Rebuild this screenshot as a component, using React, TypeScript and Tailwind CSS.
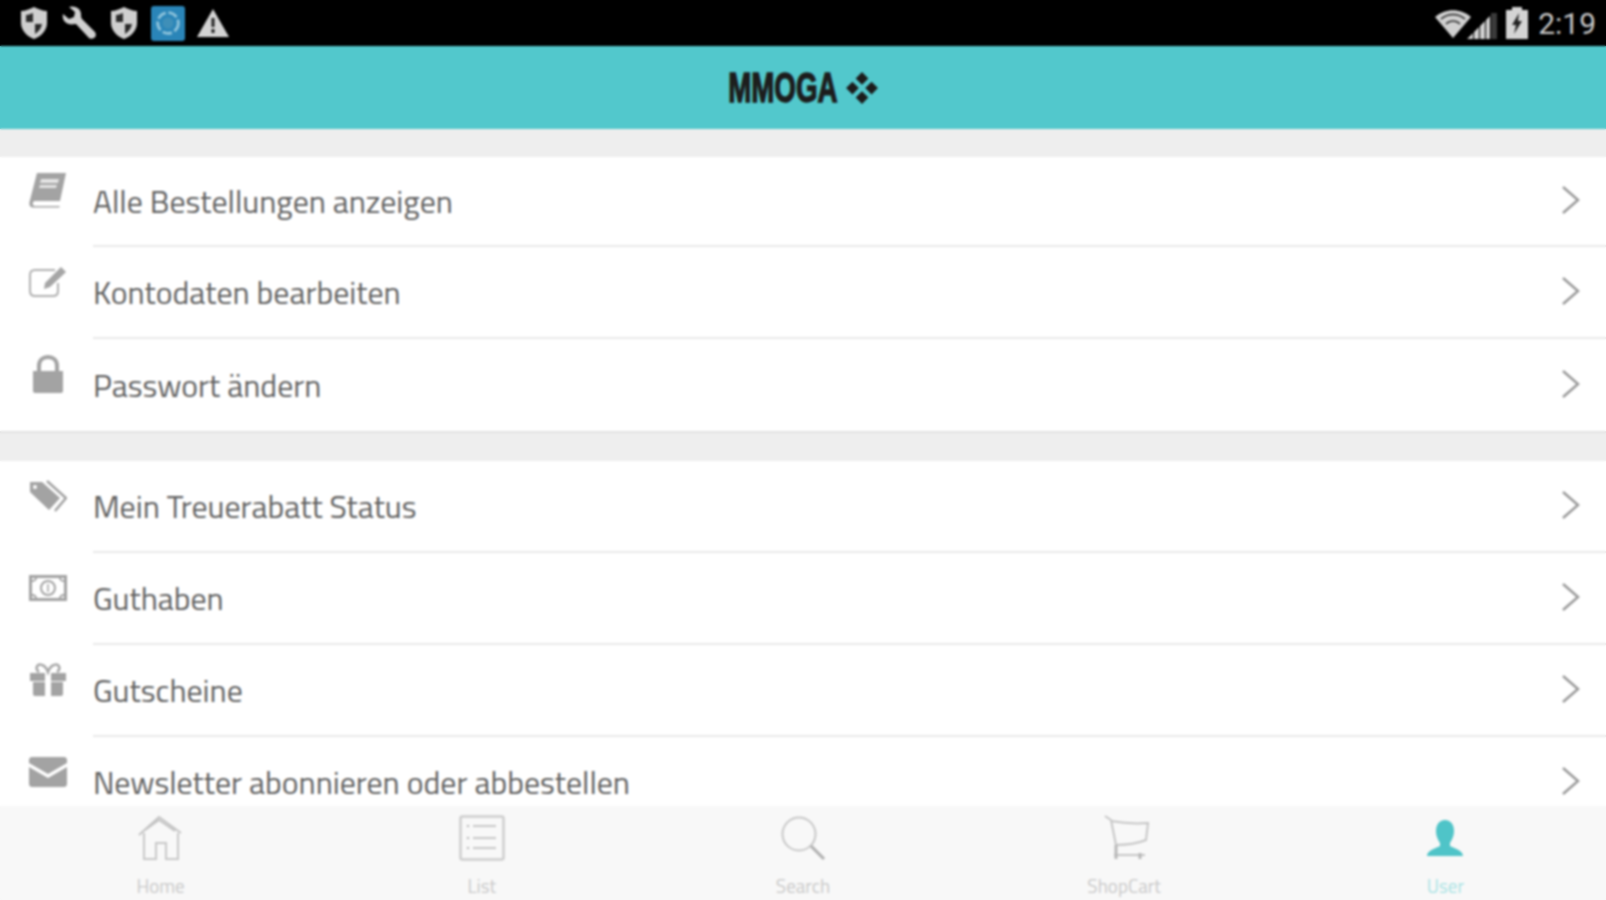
import React from 'react'

const FONT = "font-['Titillium_Web','Lato','Noto_Sans',sans-serif]"

function Shield() {
  return (
    <svg viewBox="0 0 30 34" className="h-[34px] w-[30px]">
      <path d="M15 1 C19 3 24 5 28 5 V17 C28 25 21 31 15 33 C9 31 2 25 2 17 V5 C6 5 11 3 15 1 Z" fill="#cfcfcf" />
      <path d="M14 7 C11 8 9 9 7 9 V16 H14 Z M16 18 H23 C22 23 19 26 16 28 Z" fill="#2a2a2a" />
    </svg>
  )
}

function Wrench() {
  return (
    <svg viewBox="0 0 36 36" className="h-[36px] w-[36px]">
      <path
        d="M2 9 L8 14 L13 12 L14 7 L8 2 C13 0 20 3 20 9 C20 11 20 13 21 14 L34 27 C35.500 29 35 32 33 33 C31 34 29 34 28 33 L15 19 C13 19 10 20 8 19 C3 18 1 13 2 9 Z"
        fill="#d0d0d0"
      />
    </svg>
  )
}

function SyncBadge() {
  return (
    <div className="flex h-[35px] w-[34px] items-center justify-center rounded-[3px] bg-[#2a85b8]">
      <svg viewBox="0 0 32 32" className="h-[30px] w-[30px]">
        <circle cx="16" cy="16" r="11" fill="none" stroke="#8fc4dc" strokeWidth="3" strokeDasharray="10 3" />
        <circle cx="16" cy="16" r="6" fill="#3f8fb8" />
      </svg>
    </div>
  )
}

function Warning() {
  return (
    <svg viewBox="0 0 32 28" className="h-[28px] w-[32px]">
      <path d="M16 0 L32 28 H0 Z" fill="#d4d4d4" />
      <path d="M14.500 9 H17.500 V18 H14.500 Z M14.500 20 H17.500 V24 H14.500 Z" fill="#222" />
    </svg>
  )
}

function Wifi() {
  return (
    <svg viewBox="0 0 38 30" className="h-[30px] w-[38px]">
      <path d="M1 9 C11 0 27 0 37 9 L19 30 Z" fill="#d0d0d0" />
      <path d="M7 11 C14 5 24 5 31 11" fill="none" stroke="#222" strokeWidth="1.500" />
      <path d="M12 16 C16 12 22 12 26 16" fill="none" stroke="#333" strokeWidth="1.500" />
    </svg>
  )
}

function Signal() {
  return (
    <svg viewBox="0 0 30 32" className="h-[32px] w-[30px]">
      <path d="M24 6 H30 V32 H24 Z" fill="#3a3a3a" />
      <path d="M0 32 L6 26 V32 Z M7 32 V25 L12 20 V32 Z M13 32 V19 L18 14 V32 Z M19 32 V13 L23 9 V32 Z" fill="#cfcfcf" />
    </svg>
  )
}

function Battery() {
  return (
    <svg viewBox="0 0 22 32" className="h-[32px] w-[22px]">
      <path d="M6 0 H16 V3 H22 V32 H0 V3 H6 Z" fill="#d4d4d4" />
      <path d="M13 6 L6 18 H10 L8 27 L16 14 H12 Z" fill="#222" />
    </svg>
  )
}

function LogoMark() {
  return (
    <svg viewBox="0 0 32 32" className="h-[34px] w-[34px]">
      <g fill="#1c1c1c">
        <path d="M16 1 L22 7 L16 13 L10 7 Z" />
        <path d="M16 19 L22 25 L16 31 L10 25 Z" />
        <path d="M7 10 L13 16 L7 22 L1 16 Z" />
        <path d="M25 10 L31 16 L25 22 L19 16 Z" />
      </g>
    </svg>
  )
}

function BookIcon() {
  return (
    <svg viewBox="0 0 38 36" className="h-[36px] w-[38px]">
      <path d="M8 1 H37 L31 29 H6 C3 29 3 34 6 34 H31 L30 35.500 H4 C1 35.500 0 33 0.500 30 Z" fill="#a3a3a3" />
      <path d="M12 7 H30 L29 11 H11 Z M11 13 H28 L27 16 H10 Z" fill="#e4e4e4" />
    </svg>
  )
}

function EditIcon() {
  return (
    <svg viewBox="0 0 38 32" className="h-[32px] w-[38px]">
      <path d="M26 4 H6 C3 4 1 6 1 9 V25 C1 28 3 30 6 30 H24 C27 30 29 28 29 25 V17" fill="none" stroke="#b0b0b0" strokeWidth="2" />
      <path d="M32 1 L37 6 L21 21 L15 23 L16 17 Z" fill="#a6a6a6" />
    </svg>
  )
}

function LockIcon() {
  return (
    <svg viewBox="0 0 32 38" className="h-[38px] w-[32px]">
      <path d="M7 17 V11 C7 5 11 2 16 2 C21 2 25 5 25 11 V17" fill="none" stroke="#a3a3a3" strokeWidth="4" />
      <path d="M1 16 H31 V36 C31 37 30 38 29 38 H3 C2 38 1 37 1 36 Z" fill="#a3a3a3" />
    </svg>
  )
}

function TagIcon() {
  return (
    <svg viewBox="0 0 38 32" className="h-[32px] w-[38px]">
      <path d="M1 2 H13 L31 18 L20 30 L1 12 Z" fill="#a3a3a3" />
      <circle cx="6" cy="7" r="2" fill="#ffffff" />
      <path d="M18 1 L37 18 L26 31" fill="none" stroke="#a3a3a3" strokeWidth="2.500" />
    </svg>
  )
}

function CashIcon() {
  return (
    <svg viewBox="0 0 38 26" className="h-[26px] w-[38px]">
      <rect x="1.500" y="1.500" width="35" height="23" fill="none" stroke="#a3a3a3" strokeWidth="3" />
      <path d="M3 6 C6 6 7 4 7 3 M35 6 C32 6 31 4 31 3 M3 20 C6 20 7 22 7 23 M35 20 C32 20 31 22 31 23" fill="none" stroke="#a3a3a3" strokeWidth="2" />
      <circle cx="19" cy="13" r="7" fill="none" stroke="#a3a3a3" strokeWidth="2" />
      <path d="M19 9 V17" stroke="#a3a3a3" strokeWidth="1.500" />
    </svg>
  )
}

function GiftIcon() {
  return (
    <svg viewBox="0 0 38 34" className="h-[34px] w-[38px]">
      <path d="M10 9 C5 5 9 0 13 2 C16 3 18 6 19 9 C20 6 22 3 25 2 C29 0 33 5 28 9" fill="none" stroke="#a8a8a8" strokeWidth="2.500" />
      <path d="M1 10 H16 V18 H1 Z M22 10 H37 V18 H22 Z M4 19 H16 V33 H6 C5 33 4 32 4 31 Z M22 19 H34 V31 C34 32 33 33 32 33 H22 Z" fill="#a3a3a3" />
    </svg>
  )
}

function MailIcon() {
  return (
    <svg viewBox="0 0 38 30" className="h-[30px] w-[38px]">
      <path d="M3 0 H35 C36.500 0 38 1 38 3 V6 L19 17 L0 6 V3 C0 1 1.500 0 3 0 Z" fill="#a3a3a3" />
      <path d="M0 10 L19 21 L38 10 V27 C38 29 36.500 30 35 30 H3 C1.500 30 0 29 0 27 Z" fill="#a3a3a3" />
    </svg>
  )
}

function Chevron() {
  return (
    <svg viewBox="0 0 20 30" className="mb-[3px] h-[30px] w-[20px]">
      <path d="M2 2 L17 15 L2 28" fill="none" stroke="#9a9a9a" strokeWidth="2.500" />
    </svg>
  )
}

function HomeNav() {
  return (
    <svg viewBox="0 0 44 46" className="-ml-[2px] h-[46px] w-[44px]">
      <path d="M1 20 L21 2 L43 18 M7 15 L21 5 L37 16" fill="none" stroke="#c4c4c4" strokeWidth="2" />
      <path d="M6 18 V44 H18 V28 H28 V44 H40 V18" fill="none" stroke="#c8c8c8" strokeWidth="2" />
    </svg>
  )
}

function ListNav() {
  return (
    <svg viewBox="0 0 46 46" className="h-[46px] w-[46px]">
      <rect x="1.500" y="1.500" width="43" height="43" rx="2" fill="none" stroke="#cdcdcd" strokeWidth="2.500" />
      <path d="M14 11 H37 M14 23 H37 M14 33 H37" stroke="#c8c8c8" strokeWidth="2" />
      <path d="M8 11 H10 M8 23 H10 M8 33 H10" stroke="#b4b4b4" strokeWidth="2" />
    </svg>
  )
}

function SearchNav() {
  return (
    <svg viewBox="0 0 46 46" className="h-[46px] w-[46px]">
      <circle cx="19" cy="19" r="16.500" fill="none" stroke="#c8c8c8" strokeWidth="2" />
      <path d="M31 31 L44 44" stroke="#b0b0b0" strokeWidth="3" />
    </svg>
  )
}

function CartNav() {
  return (
    <svg viewBox="0 0 46 46" className="ml-[5px] h-[46px] w-[46px]">
      <path d="M1 1 L7 5 L12 30 M7 6 C18 8 32 9 44 8 L42 25 C32 29 22 30 12 30 M10 40 H41" fill="none" stroke="#c6c6c6" strokeWidth="2" />
      <path d="M12 30 L12 44 M36 38 L36 44" stroke="#b8b8b8" strokeWidth="3" />
    </svg>
  )
}

function UserNav() {
  return (
    <svg viewBox="0 0 38 38" className="h-[38px] w-[38px]">
      <path
        d="M19 1 C25 1 28 6 28 12 C28 18 25 22 24 24 V27 C27 29 37 31 37 37 H1 C1 31 11 29 14 27 V24 C13 22 10 18 10 12 C10 6 13 1 19 1 Z"
        fill="#4fc4c8"
      />
    </svg>
  )
}

function Row({ icon, label, first, last }: { icon: React.ReactNode; label: string; first?: boolean; last?: boolean }) {
  return (
    <div className={`flex bg-white ${first ? 'h-[90px]' : 'h-[92px]'}`}>
      <div className={`flex w-[93px] shrink-0 justify-center pl-[3px] ${first ? 'pt-[14px]' : 'pt-[16px]'}`}>
        <div className="flex h-[38px] items-center">{icon}</div>
      </div>
      <div className={`flex flex-1 items-center justify-between pr-[25px] ${last ? '' : 'border-b-2 border-[#e9e9e9]'}`}>
        <span className="text-[31.85px] leading-[36px] text-[#616161]">{label}</span>
        <Chevron />
      </div>
    </div>
  )
}

function NavItem({ icon, label, active }: { icon: React.ReactNode; label: string; active?: boolean }) {
  return (
    <div className="flex flex-col items-center pt-[8px]">
      <div className="flex h-[48px] items-center">{icon}</div>
      <span className={`mt-[12px] text-[19px] leading-[24px] ${active ? 'text-[#a9e3e4]' : 'text-[#c9c9c9]'}`}>{label}</span>
    </div>
  )
}

export default function App() {
  return (
    <div className={`relative flex h-[900px] w-[1606px] flex-col overflow-hidden bg-white ${FONT}`}>
      <div className="flex h-[46px] shrink-0 items-center justify-between bg-black pl-[19px] pr-[10px]">
        <div className="flex items-center gap-[12px]">
          <Shield />
          <Wrench />
          <Shield />
          <SyncBadge />
          <Warning />
        </div>
        <div className="flex items-center">
          <div className="-mr-[5px]">
            <Wifi />
          </div>
          <Signal />
          <div className="ml-[9px]">
            <Battery />
          </div>
          <span className="ml-[10px] font-['Roboto',sans-serif] text-[30px] font-normal text-[#c8c8c8]">2:19</span>
        </div>
      </div>

      <div className="flex h-[83px] shrink-0 items-center justify-center gap-[6px] bg-[#52c8cc]">
        <span className="-mx-[27px] origin-center scale-x-[0.66] font-['Liberation_Sans',sans-serif] text-[42px] font-bold text-[#1c1c1c] [-webkit-text-stroke:1.5px_#1c1c1c]">
          MMOGA
        </span>
        <LogoMark />
      </div>

      <div className="min-h-0 flex-1 overflow-hidden">
        <div className="h-[28px] bg-[#eeeeee]" />
        <Row icon={<BookIcon />} label="Alle Bestellungen anzeigen" first />
        <Row icon={<EditIcon />} label="Kontodaten bearbeiten" />
        <Row icon={<LockIcon />} label="Passwort ändern" last />
        <div className="h-[30px] border-t-2 border-[#e2e2e2] bg-[#eeeeee]" />
        <Row icon={<TagIcon />} label="Mein Treuerabatt Status" />
        <Row icon={<CashIcon />} label="Guthaben" />
        <Row icon={<GiftIcon />} label="Gutscheine" />
        <Row icon={<MailIcon />} label="Newsletter abonnieren oder abbestellen" />
      </div>

      <div className="grid h-[94px] shrink-0 grid-cols-5 bg-[#f8f8f8]">
        <NavItem icon={<HomeNav />} label="Home" />
        <NavItem icon={<ListNav />} label="List" />
        <NavItem icon={<SearchNav />} label="Search" />
        <NavItem icon={<CartNav />} label="ShopCart" />
        <NavItem icon={<UserNav />} label="User" active />
      </div>

      {/* the reference is an upscaled low-res capture, this softens everything under it */}
      <div className="pointer-events-none absolute inset-0 backdrop-blur-[0.8px]" />
    </div>
  )
}
